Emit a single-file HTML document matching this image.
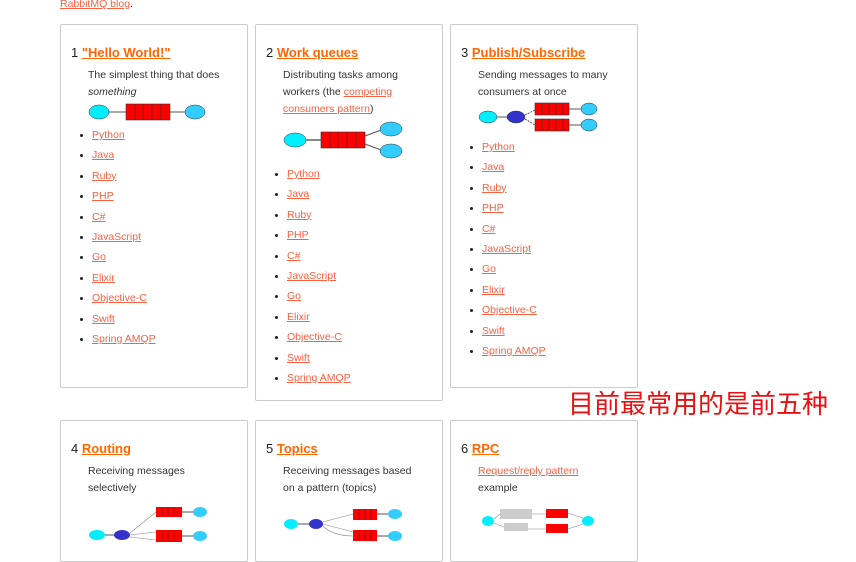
<!DOCTYPE html>
<html><head><meta charset="utf-8"><style>
body{margin:0;width:856px;height:546px;overflow:hidden;background:#fff;font-family:"Liberation Sans",sans-serif;color:#222;position:relative}
.a{position:absolute}
.card{position:absolute;border:1px solid #ccc;border-radius:2px;background:#fff}
.t{position:absolute;font-size:13px;white-space:nowrap}
.t b{color:#f60;text-decoration:underline;font-size:13px}
.d{position:absolute;font-size:10.5px;line-height:17px;white-space:nowrap;color:#333}
.l{color:#f96040;text-decoration:underline}
ul{position:absolute;margin:0;padding:0;list-style:none;font-size:10.5px}
ul li{height:20.4px;line-height:12px;position:relative;padding-left:12px}
ul li:before{content:"";position:absolute;left:0;top:5px;width:3px;height:3px;background:#222;border-radius:50%}
ul li span{color:#f96040;text-decoration:underline}
.cn{position:absolute;left:568px;top:384px;font-size:26px;color:#e81010;font-family:"Liberation Sans","Noto Sans CJK SC",sans-serif;white-space:nowrap}
</style></head><body>
<div class="a" style="left:60px;top:-2px;font-size:10.5px"><span class="l">RabbitMQ blog</span>.</div>

<div class="card" style="left:60px;top:24px;width:186px;height:362px"></div>
<div class="card" style="left:255px;top:24px;width:186px;height:375px"></div>
<div class="card" style="left:450px;top:24px;width:186px;height:362px"></div>
<div class="card" style="left:60px;top:420px;width:186px;height:140px"></div>
<div class="card" style="left:255px;top:420px;width:186px;height:140px"></div>
<div class="card" style="left:450px;top:420px;width:186px;height:140px"></div>

<div class="t" style="left:71px;top:45px">1 <b>"Hello World!"</b></div>
<div class="d" style="left:88px;top:67px">The simplest thing that does<br><i>something</i></div>
<svg class="a" style="left:88px;top:103px" width="120" height="18"><ellipse cx="11" cy="9" rx="10" ry="7" fill="#0ef" stroke="#333" stroke-width=".5"/><line x1="21" y1="9" x2="38" y2="9" stroke="#555"/><rect x="38" y="1" width="44" height="16" fill="#f00" stroke="#333" stroke-width=".6"/><path d="M47 1v16M55 1v16M64 1v16M73 1v16" stroke="#333" stroke-width=".6"/><line x1="82" y1="9" x2="98" y2="9" stroke="#555"/><ellipse cx="107" cy="9" rx="10" ry="7" fill="#3cf" stroke="#333" stroke-width=".5"/></svg>
<ul style="left:80px;top:129px"><li><span>Python</span></li><li><span>Java</span></li><li><span>Ruby</span></li><li><span>PHP</span></li><li><span>C#</span></li><li><span>JavaScript</span></li><li><span>Go</span></li><li><span>Elixir</span></li><li><span>Objective-C</span></li><li><span>Swift</span></li><li><span>Spring AMQP</span></li></ul>

<div class="t" style="left:266px;top:45px">2 <b>Work queues</b></div>
<div class="d" style="left:283px;top:67px">Distributing tasks among<br>workers (the <span class="l">competing</span><br><span class="l">consumers pattern</span>)</div>
<svg class="a" style="left:283px;top:120px" width="122" height="40"><ellipse cx="12" cy="20" rx="11" ry="7" fill="#0ef" stroke="#333" stroke-width=".5"/><line x1="23" y1="20" x2="38" y2="20" stroke="#888" stroke-width="2"/><rect x="38" y="12" width="44" height="16" fill="#f00" stroke="#333" stroke-width=".6"/><path d="M47 12v16M55 12v16M64 12v16M73 12v16" stroke="#333" stroke-width=".6"/><path d="M82 16L98 10M82 24L98 30" stroke="#555"/><ellipse cx="108" cy="9" rx="11" ry="7" fill="#3cf" stroke="#333" stroke-width=".5"/><ellipse cx="108" cy="31" rx="11" ry="7" fill="#3cf" stroke="#333" stroke-width=".5"/></svg>
<ul style="left:275px;top:168px"><li><span>Python</span></li><li><span>Java</span></li><li><span>Ruby</span></li><li><span>PHP</span></li><li><span>C#</span></li><li><span>JavaScript</span></li><li><span>Go</span></li><li><span>Elixir</span></li><li><span>Objective-C</span></li><li><span>Swift</span></li><li><span>Spring AMQP</span></li></ul>

<div class="t" style="left:461px;top:45px">3 <b>Publish/Subscribe</b></div>
<div class="d" style="left:478px;top:67px">Sending messages to many<br>consumers at once</div>
<svg class="a" style="left:478px;top:101px" width="122" height="32"><ellipse cx="10" cy="16" rx="9" ry="6" fill="#0ef" stroke="#333" stroke-width=".5"/><line x1="19" y1="16" x2="29" y2="16" stroke="#555"/><ellipse cx="38" cy="16" rx="9" ry="6" fill="#33c" stroke="#333" stroke-width=".5"/><path d="M47 14L57 9M47 18L57 24" stroke="#555" stroke-dasharray="2 1"/><rect x="57" y="2" width="34" height="12" fill="#f00" stroke="#333" stroke-width=".6"/><rect x="57" y="18" width="34" height="12" fill="#f00" stroke="#333" stroke-width=".6"/><path d="M64 2v12M71 2v12M78 2v12M85 2v12M64 18v12M71 18v12M78 18v12M85 18v12" stroke="#333" stroke-width=".6"/><path d="M91 8h12M91 24h12" stroke="#555"/><ellipse cx="111" cy="8" rx="8" ry="6" fill="#3cf" stroke="#333" stroke-width=".5"/><ellipse cx="111" cy="24" rx="8" ry="6" fill="#3cf" stroke="#333" stroke-width=".5"/></svg>
<ul style="left:470px;top:141px"><li><span>Python</span></li><li><span>Java</span></li><li><span>Ruby</span></li><li><span>PHP</span></li><li><span>C#</span></li><li><span>JavaScript</span></li><li><span>Go</span></li><li><span>Elixir</span></li><li><span>Objective-C</span></li><li><span>Swift</span></li><li><span>Spring AMQP</span></li></ul>

<div class="cn">目前最常用的是前五种</div>

<div class="t" style="left:71px;top:441px">4 <b>Routing</b></div>
<div class="d" style="left:88px;top:463px">Receiving messages<br>selectively</div>
<svg class="a" style="left:88px;top:502px" width="122" height="44"><ellipse cx="9" cy="33" rx="8" ry="5" fill="#0ef"/><line x1="17" y1="33" x2="27" y2="33" stroke="#555"/><ellipse cx="34" cy="33" rx="8" ry="5" fill="#33c"/><path d="M42 31L68 10M42 33L68 30M42 35L68 38" stroke="#888" stroke-width=".6"/><rect x="68" y="5" width="26" height="10" fill="#f00"/><rect x="68" y="28" width="26" height="12" fill="#f00"/><path d="M74 5v10M80 5v10M86 5v10M74 28v12M80 28v12M86 28v12" stroke="#333" stroke-width=".5"/><path d="M94 10h12M94 34h12" stroke="#555"/><ellipse cx="112" cy="10" rx="7" ry="5" fill="#3cf"/><ellipse cx="112" cy="34" rx="7" ry="5" fill="#3cf"/></svg>

<div class="t" style="left:266px;top:441px">5 <b>Topics</b></div>
<div class="d" style="left:283px;top:463px">Receiving messages based<br>on a pattern (topics)</div>
<svg class="a" style="left:283px;top:502px" width="122" height="44"><ellipse cx="8" cy="22" rx="7" ry="5" fill="#0ef"/><line x1="15" y1="22" x2="26" y2="22" stroke="#555"/><ellipse cx="33" cy="22" rx="7" ry="5" fill="#33c"/><path d="M40 20L70 12M40 22L70 30M40 24Q50 34 70 34" stroke="#888" stroke-width=".6" fill="none"/><rect x="70" y="7" width="24" height="11" fill="#f00"/><rect x="70" y="28" width="24" height="11" fill="#f00"/><path d="M76 7v11M82 7v11M88 7v11M76 28v11M82 28v11M88 28v11" stroke="#333" stroke-width=".5"/><path d="M94 12h12M94 34h12" stroke="#555"/><ellipse cx="112" cy="12" rx="7" ry="5" fill="#3cf"/><ellipse cx="112" cy="34" rx="7" ry="5" fill="#3cf"/></svg>

<div class="t" style="left:461px;top:441px">6 <b>RPC</b></div>
<div class="d" style="left:478px;top:463px"><span class="l">Request/reply pattern</span><br>example</div>
<svg class="a" style="left:480px;top:505px" width="120" height="34"><ellipse cx="8" cy="16" rx="6" ry="5" fill="#0ef"/><rect x="20" y="4" width="32" height="10" fill="#ccc"/><rect x="24" y="18" width="24" height="8" fill="#ccc"/><path d="M14 14L20 9M52 9h14M66 24H48M24 22L14 18" stroke="#888" stroke-width=".6"/><rect x="66" y="4" width="22" height="9" fill="#f00"/><rect x="66" y="19" width="22" height="9" fill="#f00"/><path d="M88 8L106 14M106 18L88 24" stroke="#888" stroke-width=".6"/><ellipse cx="108" cy="16" rx="6" ry="5" fill="#0ef"/></svg>
</body></html>
